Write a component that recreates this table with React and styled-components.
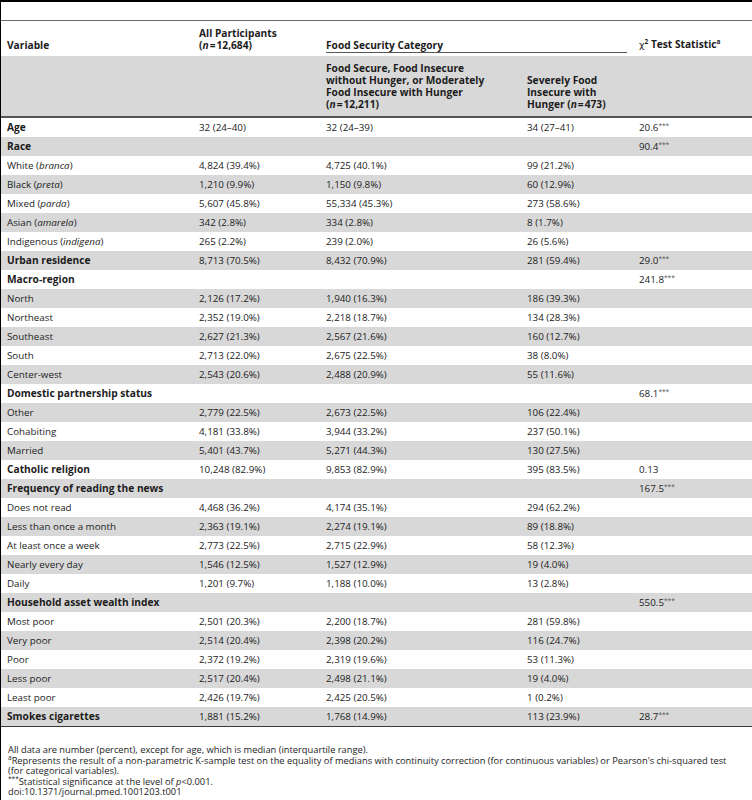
import React from "react";
import styled, { createGlobalStyle } from "styled-components";

const GlobalStyle = createGlobalStyle`
  html, body { margin: 0; padding: 0; background: #fff; }
  body { font-family: "Open Sans", "Noto Sans", sans-serif; color: #1c1c1c; }
`;

const Frame = styled.div`
  width: 752px;
  min-height: 800px;
  box-sizing: border-box;
  border-top: 2px solid #000;
  border-left: 1px solid #000;
  padding-top: 18px;
  overflow: hidden;
`;

const Table = styled.table`
  width: 751px;
  border-collapse: collapse;
  table-layout: fixed;
  font-size: 9.8px;
  border-top: 1px solid #6a6a6a;
  border-bottom: 1.5px solid #3a3a3a;
`;

const HeadCell = styled.th`
  text-align: left;
  font-weight: 700;
  font-size: 10.2px;
  vertical-align: bottom;
  line-height: 12px;
  padding: ${(p) => (p.$sub ? "6px 6px 6px 6px" : "6px 6px 5px 6px")};
  background: ${(p) => (p.$sub ? "#d8d8d8" : "#fff")};
`;

const SubHeadRow = styled.tr`
  border-bottom: 2px solid #555;
`;

const Spanner = styled.div`
  border-bottom: 1px solid #555;
  padding-bottom: 1px;
  margin-bottom: -2px;
`;

const Row = styled.tr`
  background: ${(p) => (p.$shaded ? "#d8d8d8" : "#fff")};
`;

const Cell = styled.td`
  padding: 3px 6px;
  line-height: 13px;
  height: 13px;
  white-space: nowrap;
  font-weight: ${(p) => (p.$bold ? 700 : 400)};
  font-size: ${(p) => (p.$bold ? "10.2px" : "9.8px")};
`;

const Stars = styled.sup`
  font-size: 6.5px;
  line-height: 0;
  vertical-align: 3px;
  color: #555;
`;

const Sup = styled.sup`
  font-size: 6.5px;
  line-height: 0;
  vertical-align: 4px;
`;

const Chi = styled.span`
  font-weight: 400;
  font-family: "DejaVu Sans", sans-serif;
  font-size: 9.5px;
`;

const Notes = styled.div`
  padding: 18px 0 0 7px;
  font-size: 9.3px;
  line-height: 10.5px;
  white-space: nowrap;
`;

const NoteLine = styled.div``;

const rows = [
  ["Age", true, "32 (24–40)", "32 (24–39)", "34 (27–41)", "20.6", true],
  ["Race", true, "", "", "", "90.4", true],
  [<>White (<i>branca</i>)</>, false, "4,824 (39.4%)", "4,725 (40.1%)", "99 (21.2%)"],
  [<>Black (<i>preta</i>)</>, false, "1,210 (9.9%)", "1,150 (9.8%)", "60 (12.9%)"],
  [<>Mixed (<i>parda</i>)</>, false, "5,607 (45.8%)", "55,334 (45.3%)", "273 (58.6%)"],
  [<>Asian (<i>amarela</i>)</>, false, "342 (2.8%)", "334 (2.8%)", "8 (1.7%)"],
  [<>Indigenous (<i>indigena</i>)</>, false, "265 (2.2%)", "239 (2.0%)", "26 (5.6%)"],
  ["Urban residence", true, "8,713 (70.5%)", "8,432 (70.9%)", "281 (59.4%)", "29.0", true],
  ["Macro-region", true, "", "", "", "241.8", true],
  ["North", false, "2,126 (17.2%)", "1,940 (16.3%)", "186 (39.3%)"],
  ["Northeast", false, "2,352 (19.0%)", "2,218 (18.7%)", "134 (28.3%)"],
  ["Southeast", false, "2,627 (21.3%)", "2,567 (21.6%)", "160 (12.7%)"],
  ["South", false, "2,713 (22.0%)", "2,675 (22.5%)", "38 (8.0%)"],
  ["Center-west", false, "2,543 (20.6%)", "2,488 (20.9%)", "55 (11.6%)"],
  ["Domestic partnership status", true, "", "", "", "68.1", true],
  ["Other", false, "2,779 (22.5%)", "2,673 (22.5%)", "106 (22.4%)"],
  ["Cohabiting", false, "4,181 (33.8%)", "3,944 (33.2%)", "237 (50.1%)"],
  ["Married", false, "5,401 (43.7%)", "5,271 (44.3%)", "130 (27.5%)"],
  ["Catholic religion", true, "10,248 (82.9%)", "9,853 (82.9%)", "395 (83.5%)", "0.13", false],
  ["Frequency of reading the news", true, "", "", "", "167.5", true],
  ["Does not read", false, "4,468 (36.2%)", "4,174 (35.1%)", "294 (62.2%)"],
  ["Less than once a month", false, "2,363 (19.1%)", "2,274 (19.1%)", "89 (18.8%)"],
  ["At least once a week", false, "2,773 (22.5%)", "2,715 (22.9%)", "58 (12.3%)"],
  ["Nearly every day", false, "1,546 (12.5%)", "1,527 (12.9%)", "19 (4.0%)"],
  ["Daily", false, "1,201 (9.7%)", "1,188 (10.0%)", "13 (2.8%)"],
  ["Household asset wealth index", true, "", "", "", "550.5", true],
  ["Most poor", false, "2,501 (20.3%)", "2,200 (18.7%)", "281 (59.8%)"],
  ["Very poor", false, "2,514 (20.4%)", "2,398 (20.2%)", "116 (24.7%)"],
  ["Poor", false, "2,372 (19.2%)", "2,319 (19.6%)", "53 (11.3%)"],
  ["Less poor", false, "2,517 (20.4%)", "2,498 (21.1%)", "19 (4.0%)"],
  ["Least poor", false, "2,426 (19.7%)", "2,425 (20.5%)", "1 (0.2%)"],
  ["Smokes cigarettes", true, "1,881 (15.2%)", "1,768 (14.9%)", "113 (23.9%)", "28.7", true],
];

const N = ({ v }) => (
  <>
    (<i>n</i>&#8202;=&#8202;{v})
  </>
);

export default function App() {
  return (
    <>
      <GlobalStyle />
      <Frame>
        <Table>
          <colgroup>
            <col style={{ width: 192 }} />
            <col style={{ width: 127 }} />
            <col style={{ width: 201 }} />
            <col style={{ width: 112 }} />
            <col style={{ width: 119 }} />
          </colgroup>
          <thead>
            <tr>
              <HeadCell>Variable</HeadCell>
              <HeadCell>
                All Participants
                <br />
                <N v="12,684" />
              </HeadCell>
              <HeadCell colSpan={2}>
                <Spanner>Food Security Category</Spanner>
              </HeadCell>
              <HeadCell>
                <Chi>χ</Chi>
                <Sup>2</Sup> Test Statistic<Sup>a</Sup>
              </HeadCell>
            </tr>
            <SubHeadRow>
              <HeadCell $sub />
              <HeadCell $sub />
              <HeadCell $sub>
                Food Secure, Food Insecure
                <br />
                without Hunger, or Moderately
                <br />
                Food Insecure with Hunger
                <br />
                <N v="12,211" />
              </HeadCell>
              <HeadCell $sub>
                Severely Food
                <br />
                Insecure with
                <br />
                Hunger <N v="473" />
              </HeadCell>
              <HeadCell $sub />
            </SubHeadRow>
          </thead>
          <tbody>
            {rows.map(([label, bold, a, b, c, chi, stars], i) => (
              <Row key={i} $shaded={i % 2 === 1}>
                <Cell $bold={bold}>{label}</Cell>
                <Cell>{a}</Cell>
                <Cell>{b}</Cell>
                <Cell>{c}</Cell>
                <Cell>
                  {chi}
                  {stars && <Stars>***</Stars>}
                </Cell>
              </Row>
            ))}
          </tbody>
        </Table>
        <Notes>
          <NoteLine>
            All data are number (percent), except for age, which is median (interquartile range).
          </NoteLine>
          <NoteLine>
            <Sup>a</Sup>Represents the result of a non-parametric K-sample test on the equality of medians
            with continuity correction (for continuous variables) or Pearson's chi-squared test
          </NoteLine>
          <NoteLine>(for categorical variables).</NoteLine>
          <NoteLine>
            <Sup>***</Sup>Statistical significance at the level of <i>p</i>&lt;0.001.
          </NoteLine>
          <NoteLine>doi:10.1371/journal.pmed.1001203.t001</NoteLine>
        </Notes>
      </Frame>
    </>
  );
}
